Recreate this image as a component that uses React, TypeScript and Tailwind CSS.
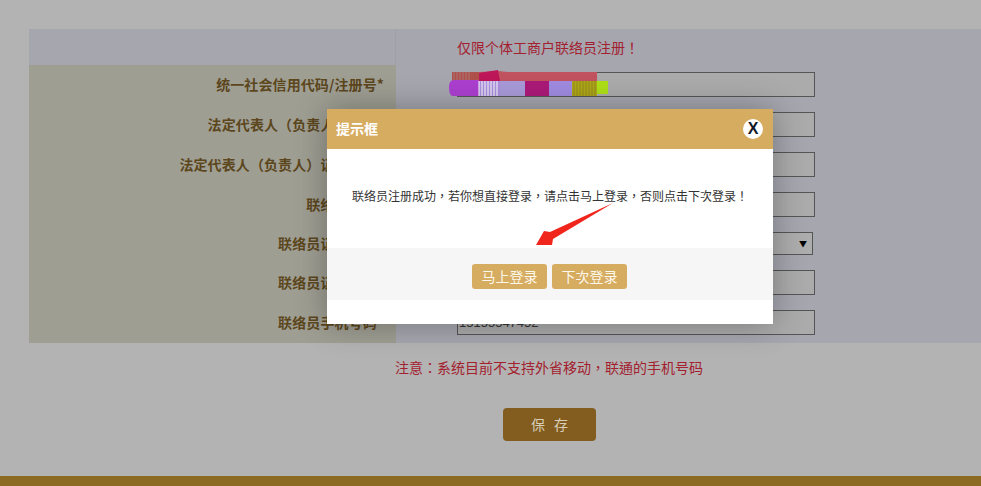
const cjk = { fontFamily: '"Noto Sans CJK TC", "Noto Sans CJK SC", "Liberation Sans", sans-serif' };

const rows = [
  { label: "统一社会信用代码/注册号*", value: "", h: "h-[40px]" },
  { label: "法定代表人（负责人）姓名*", value: "", h: "h-[40px]" },
  { label: "法定代表人（负责人）证件号码*", value: "", h: "h-[40px]" },
  { label: "联络员姓名*", value: "", h: "h-[40px]" },
  { label: "联络员证件类型*", value: "", h: "h-[38px]", select: true },
  { label: "联络员证件号码*", value: "", h: "h-[40px]" },
  { label: "联络员手机号码*", value: "15155547452", h: "h-[40px]" },
];

function Scribble() {
  return (
    <svg className="absolute left-[448px] top-[70px]" width="162" height="28" viewBox="0 0 162 28">
      <path d="M4 2 H31 L50 1 L60 2 H149 V11 H4 Z" fill="#c0535f" />
      <rect x="4" y="2" width="27" height="9" fill="#b0504a" />
      <path d="M6 2 V11 M9 2 V11 M12 2 V11 M15 2 V11 M18 2 V11 M21 2 V11" stroke="#a9787c" strokeWidth="1" />
      <path d="M31 3 L50 0 L52 11 H31 Z" fill="#bd1659" />
      <path d="M1 17 Q1 10 6 10 H31 V26 H5 Q1 26 1 17 Z" fill="#ac3fd0" />
      <rect x="31" y="11" width="21" height="15" fill="#a98fdd" />
      <path d="M31 11 V26 M34 11 V26 M37 11 V26 M40 11 V26 M43 11 V26 M46 11 V26 M49 11 V26" stroke="#ffffff" strokeWidth="1" />
      <rect x="52" y="11" width="25" height="15" fill="#a89ad8" />
      <rect x="77" y="11" width="24" height="15" fill="#ab1a78" />
      <rect x="101" y="11" width="23" height="15" fill="#a08be0" />
      <rect x="124" y="11" width="25" height="15" fill="#b0a818" />
      <path d="M126 11 V26 M129 11 V26 M132 11 V26 M135 11 V26 M138 11 V26 M141 11 V26 M144 11 V26 M147 11 V26" stroke="#8f8a1c" strokeWidth="1" />
      <rect x="149" y="11" width="11" height="13" fill="#aee017" />
    </svg>
  );
}

export default function App() {
  return (
    <div className="relative h-[486px] w-[981px] overflow-hidden bg-[#b3b3b3]" style={cjk}>
      <div className="pl-[29px] pt-[29px]">
        <div className="w-[952px] bg-[#a6a6af]">
          <div className="flex h-[36px]">
            <div className="w-[367px] border-r border-[#a0a0a9]" />
            <div className="pl-[61px] pt-[8px] text-[14px] leading-[20px] text-[#a3212f]">仅限个体工商户联络员注册！</div>
          </div>
          {rows.map((r) => (
            <div key={r.label} className={`flex ${r.h}`}>
              <div className="flex w-[367px] shrink-0 items-center justify-end bg-[#9e9e93] pr-[12px] pb-[1px] text-[14px] font-bold tracking-[0.1px] text-[#5c461c]">
                {r.label}
              </div>
              <div className="pl-[61px] pt-[7px]">
                {r.select ? (
                  <div className="flex h-[23px] w-[356px] items-center justify-end border border-[#555555] bg-[#adadad] pr-[5px] text-[8px] leading-none text-black">▼</div>
                ) : (
                  <div className="flex h-[25px] w-[358px] items-center border border-[#555555] bg-[#ababab] pl-[1px] text-[13px] text-[#333333]" style={{ fontFamily: '"Liberation Sans", sans-serif' }}>
                    {r.value}
                  </div>
                )}
              </div>
            </div>
          ))}
        </div>
        <div className="w-[952px] pt-[14px] pl-[366px] text-[14px] leading-[20px] text-[#a3212f]">注意：系统目前不支持外省移动，联通的手机号码</div>
        <div className="pl-[474px] pt-[31px]">
          <div className="flex h-[33px] w-[93px] items-center justify-center rounded-[4px] bg-[#835d20] pl-[3px] text-[14px] tracking-[3px] text-[#d8cfb8]">保 存</div>
        </div>
      </div>
      <div className="absolute bottom-0 left-0 h-[10px] w-full bg-[#8c6a21]" />

      <Scribble />

      <div className="absolute left-[327px] top-[109px] h-[215px] w-[446px] bg-white shadow-[0_0_30px_rgba(0,0,0,0.3)]">
        <div className="flex h-[40px] items-center justify-between bg-[#d6ac61] pl-[9px] pr-[10px]">
          <span className="pb-[1px] text-[14px] font-bold text-white">提示框</span>
          <span className="flex h-[20px] w-[20px] items-center justify-center rounded-full bg-white text-[16px] font-bold text-[#111827]" style={{ fontFamily: '"Liberation Sans", sans-serif' }}>X</span>
        </div>
        <div className="flex h-[99px] justify-center pt-[37px] text-[12px] leading-[20px] text-[#333333]">
          <span>联络员注册成功，若你想直接登录，请点击马上登录，否则点击下次登录！</span>
        </div>
        <div className="flex h-[52px] items-start justify-center gap-[5px] bg-[#f7f6f6] pr-[1px] pt-[16px]">
          <div className="flex h-[25px] w-[75px] items-center justify-center rounded-[3px] bg-[#d6ac61] text-[14px] text-[#fdf8ec]">马上登录</div>
          <div className="flex h-[25px] w-[75px] items-center justify-center rounded-[3px] bg-[#d6ac61] text-[14px] text-[#fdf8ec]">下次登录</div>
        </div>
      </div>

      <svg className="absolute left-[530px] top-[198px]" width="90" height="52" viewBox="0 0 90 52">
        <path d="M83 5 L20 34 L14 33 L6 47 L22 47 L23 41 Z" fill="#f0251c" />
      </svg>
    </div>
  );
}
